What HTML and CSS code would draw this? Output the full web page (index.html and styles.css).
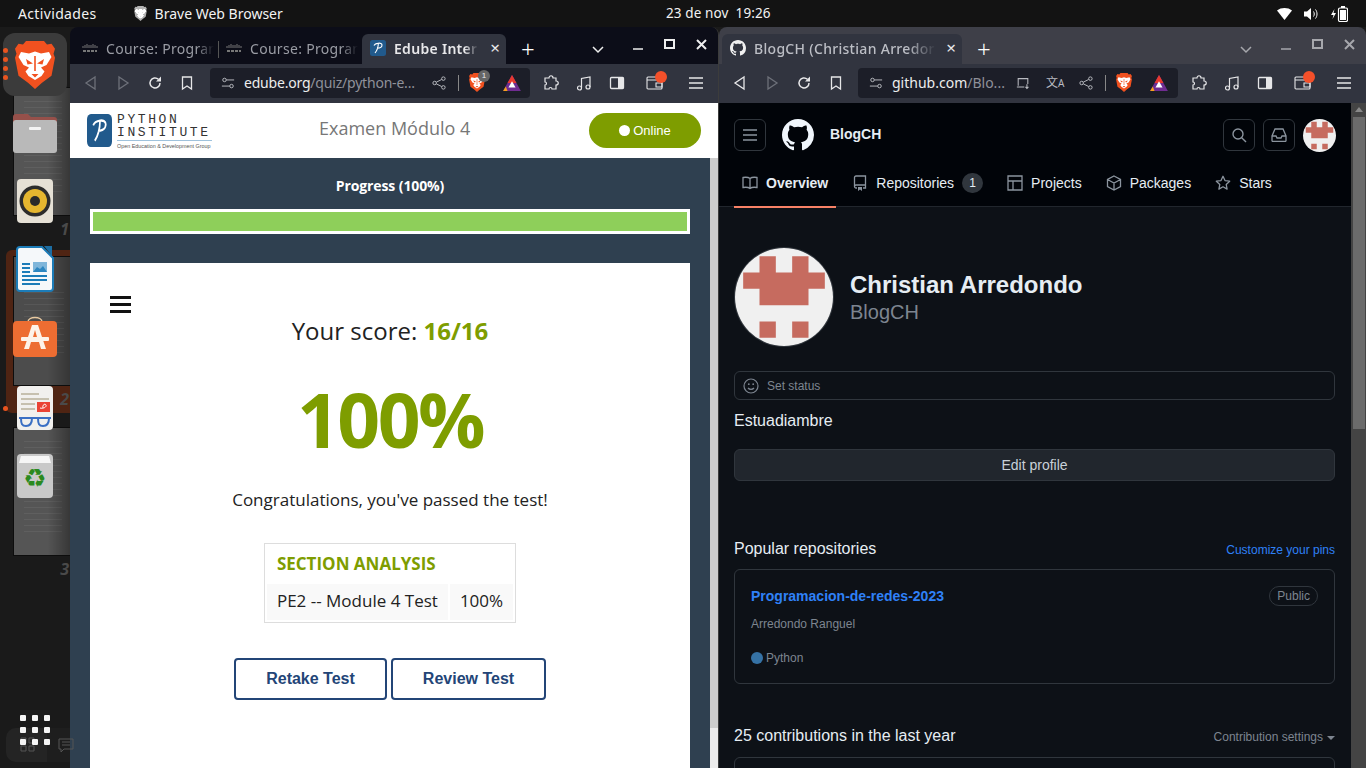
FILE: index.html
```html
<!DOCTYPE html>
<html lang="es">
  <head>
    <meta charset="UTF-8" />
    <title>Escritorio</title>
    <link rel="stylesheet" href="styles.css">
  </head>
  <body>
    <svg class="defs" width="0" height="0">
      <defs>
        <symbol id="brave" viewBox="0 0 40 48">
          <path fill="#f1511f" d="M11 0h18l3 3.500 4.500-.8 3.500 5-1.500 5 1.500 4-3.500 18-9.500 7L20 48l-7-6.300-9.500-7L0 16.700l1.500-4-1.500-5 3.500-5L8 3.500z"/>
          <path fill="#fff" d="M6 11l8 1.500 6-2 6 2 8-1.500 2.500 5-5 8-5.500 2.500 3.500 4-3 4.500-6.500 4-6.500-4-3-4.500 3.500-4-5.500-2.500-5-8z"/>
          <path fill="#f1511f" d="M11 18l7 4.500-5.500 1zM29 18l-7 4.500 5.500 1zM16.500 33h7L20 36.500z"/>
          <path fill="#f1511f" d="M19.200 15h1.600v15h-1.600z"/>
        </symbol>
        <symbol id="bat" viewBox="0 0 20 18">
          <path fill="#6f2c91" d="M10 0L20 18H0z"/>
          <path fill="#e8392f" d="M10 0l5 9H5z"/>
          <path fill="#fff" d="M10 7l4 7H6z"/>
          <path fill="#f7a21b" d="M0 18l3-5 2 5z"/>
        </symbol>
        <symbol id="cisco" viewBox="0 0 16 10">
          <path stroke="#777" stroke-width="1" d="M1 3v2M3 2v3M5 1v4M7 2v3M9 2v3M11 1v4M13 2v3M15 3v2"/>
          <path stroke="#777" stroke-width="2" d="M1 8h14" stroke-dasharray="3 1"/>
        </symbol>
        <symbol id="python-p" viewBox="0 0 16 16" preserveAspectRatio="none">
          <rect width="16" height="16" rx="2.500" fill="#215a8c"/>
          <path fill="none" stroke="#fff" stroke-width="1.100" d="M4 5.500c1-2.500 8-3.500 8-.5s-4 3.200-5 3.200M8.300 3.500c0 3.500-1.300 7-3.300 9.500"/>
        </symbol>
        <symbol id="gh-mark" viewBox="0 0 16 16">
          <path fill="currentColor" d="M8 0C3.580 0 0 3.580 0 8c0 3.540 2.290 6.530 5.470 7.590.4.070.55-.17.55-.38 0-.19-.01-.82-.01-1.490-2.010.37-2.530-.49-2.690-.94-.09-.23-.48-.94-.82-1.130-.28-.15-.68-.52-.01-.53.63-.01 1.080.58 1.230.82.72 1.210 1.870.87 2.330.66.070-.52.28-.87.51-1.070-1.780-.2-3.640-.89-3.640-3.950 0-.87.31-1.590.82-2.150-.08-.2-.36-1.020.08-2.120 0 0 .67-.21 2.200.82.64-.18 1.320-.27 2-.27s1.360.09 2 .27c1.530-1.040 2.200-.82 2.200-.82.44 1.100.16 1.920.08 2.120.51.56.82 1.270.82 2.150 0 3.070-1.870 3.750-3.650 3.950.29.25.54.73.54 1.480 0 1.070-.01 1.930-.01 2.200 0 .21.15.46.55.38A8.010 8.010 0 0016 8c0-4.420-3.580-8-8-8z"/>
        </symbol>
        <symbol id="identicon" viewBox="0 0 6 6">
          <rect width="6" height="6" fill="#f0f0f0"/>
          <path fill="#c66b5f" d="M1.500.5h1v1h1v-1h1v1h1v1h-1v1h-3v-1h-1v-1h1zM1.500 4.500h1v1h-1zM3.500 4.500h1v1h-1z"/>
        </symbol>
        <symbol id="ic-back" viewBox="0 0 16 16"><path fill="none" stroke="currentColor" stroke-width="1.300" d="M12 2v12L3 8z"/></symbol>
        <symbol id="ic-fwd" viewBox="0 0 16 16"><path fill="none" stroke="currentColor" stroke-width="1.300" d="M4 2v12l9-6z"/></symbol>
        <symbol id="ic-reload" viewBox="0 0 16 16"><path fill="none" stroke="currentColor" stroke-width="1.500" d="M13 8a5 5 0 1 1-1.600-3.700"/><path fill="currentColor" d="M14 1.500v5h-5z"/></symbol>
        <symbol id="ic-bookmark" viewBox="0 0 16 16"><path fill="none" stroke="currentColor" stroke-width="1.300" d="M3.500 2h9v12L8 11l-4.500 3z"/></symbol>
        <symbol id="ic-tune" viewBox="0 0 16 16"><g fill="none" stroke="currentColor" stroke-width="1.100"><circle cx="4" cy="4.500" r="2"/><circle cx="12" cy="11.500" r="2"/><path d="M6 4.500h9M1 11.500h9"/></g></symbol>
        <symbol id="ic-share" viewBox="0 0 16 16"><g fill="none" stroke="currentColor" stroke-width="1.100"><circle cx="3" cy="8" r="2"/><circle cx="13" cy="3" r="2"/><circle cx="13" cy="13" r="2"/><path d="M5 7l6-3M5 9l6 3"/></g></symbol>
        <symbol id="ic-puzzle" viewBox="0 0 16 16"><path fill="none" stroke="currentColor" stroke-width="1.200" d="M6 3c0-3 4-3 4 0h3v3c3 0 3 4 0 4v4H9c0-2-3-2-3 0H2v-4c2 0 2-3 0-3V3z"/></symbol>
        <symbol id="ic-music" viewBox="0 0 16 16"><g fill="none" stroke="currentColor" stroke-width="1.200"><circle cx="3.500" cy="13" r="2"/><circle cx="12" cy="12" r="2"/><path d="M5.500 13V3.500L14 2v10"/></g></symbol>
        <symbol id="ic-side" viewBox="0 0 16 16"><rect x="1.500" y="2.500" width="13" height="11" rx="1" fill="none" stroke="currentColor" stroke-width="1.300"/><rect x="9" y="2.500" width="5.500" height="11" fill="currentColor"/></symbol>
        <symbol id="ic-wallet" viewBox="0 0 18 16"><g fill="none" stroke="currentColor" stroke-width="1.100"><rect x="1" y="2" width="15" height="12" rx="1"/><path d="M1 5h15M10 8h6v4h-6z"/></g></symbol>
        <symbol id="ic-menu" viewBox="0 0 16 16"><path stroke="currentColor" stroke-width="1.400" d="M1 3h14M1 8h14M1 13h14"/></symbol>
        <symbol id="ic-cast" viewBox="0 0 16 16"><g fill="none" stroke="currentColor" stroke-width="1.200"><path d="M2.500 11V3h11v6"/><path d="M1 12.500h8.500M12.500 9.500v4.500M10.800 12.500l1.700 1.700 1.700-1.700"/></g></symbol>
        <symbol id="oc-book" viewBox="0 0 16 16"><path fill="none" stroke="currentColor" stroke-width="1.300" d="M8 3.500C6.800 2.500 4 2 1 2.500v10c3-.5 5.800 0 7 1 1.200-1 4-1.500 7-1v-10c-3-.5-5.800 0-7 1zM8 3.500v10"/></symbol>
        <symbol id="oc-repo" viewBox="0 0 16 16"><path fill="none" stroke="currentColor" stroke-width="1.300" d="M5 13H4a1.500 1.500 0 0 1-1.500-1.500v-9A1.500 1.500 0 0 1 4 1h9.500v12H11M2.500 11.500A1.500 1.500 0 0 1 4 10h9.500"/><path fill="currentColor" d="M6 12h4v4l-2-1.500L6 16z"/></symbol>
        <symbol id="oc-table" viewBox="0 0 16 16"><path fill="none" stroke="currentColor" stroke-width="1.300" d="M1 1h14v14H1zM1 6h14M6 6v9"/></symbol>
        <symbol id="oc-pkg" viewBox="0 0 16 16"><path fill="none" stroke="currentColor" stroke-width="1.300" d="M8 1l6.500 3.500v7L8 15l-6.500-3.500v-7zM1.500 4.500L8 8l6.500-3.500M8 8v7"/></symbol>
        <symbol id="oc-star" viewBox="0 0 16 16"><path fill="none" stroke="currentColor" stroke-width="1.300" stroke-linejoin="round" d="M8 1.300l2 4.300 4.700.6-3.500 3.200.9 4.700L8 11.800l-4.100 2.300.9-4.700-3.500-3.200 4.700-.6z"/></symbol>
        <symbol id="oc-search" viewBox="0 0 16 16"><g fill="none" stroke="currentColor" stroke-width="1.400"><circle cx="7" cy="7" r="5"/><path d="M10.700 10.700L15 15"/></g></symbol>
        <symbol id="oc-inbox" viewBox="0 0 16 16"><path fill="none" stroke="currentColor" stroke-width="1.300" d="M4 2h8l3 7v4.500a.800.800 0 0 1-1 .800H2a.800.800 0 0 1-1-.800V9zM1 9h4l1 2h4l1-2h4"/></symbol>
        <symbol id="oc-smile" viewBox="0 0 16 16"><g fill="none" stroke="currentColor" stroke-width="1.200"><circle cx="8" cy="8" r="7"/><path d="M5 10c1.500 1.800 4.500 1.800 6 0"/></g><circle cx="5.800" cy="6.200" r=".9" fill="currentColor"/><circle cx="10.200" cy="6.200" r=".9" fill="currentColor"/></symbol>
      </defs>
    </svg>

    <div class="screen">
      <header class="topbar">
        <div class="topbar-left">
          <span class="activities">Actividades</span>
          <span class="app-name">
            <svg class="app-icon"><use href="#brave"/></svg>
            Brave Web Browser
          </span>
        </div>
        <div class="clock">23 de nov&nbsp; 19:26</div>
        <div class="tray">
          <svg width="15" height="12" viewBox="0 0 15 12"><path fill="#fff" d="M0 2.500C4-.8 11-.8 15 2.500L7.500 12z"/></svg>
          <svg width="15" height="14" viewBox="0 0 15 14"><path fill="#fff" d="M0 4.500h3L7 1v12L3 9.500H0z"/><path fill="none" stroke="#fff" stroke-width="1" d="M9.500 4.500c1 1.500 1 3.500 0 5M11.500 2.500c2 2.500 2 6.500 0 9"/></svg>
          <svg width="17" height="16" viewBox="0 0 17 16"><path fill="#fff" d="M3.500 3L0 9h2.500L1.500 13 5 7H2.500z"/><rect x="7.500" y="2" width="9" height="13.500" rx="1.500" fill="none" stroke="#fff" stroke-width="1.200"/><rect x="10" y="0" width="4" height="2" fill="#fff"/><rect x="9" y="4" width="6" height="10" fill="#fff"/></svg>
        </div>
      </header>

      <div class="desktop">
        <aside class="dock">
          <div class="workspace ws-1"><span class="ws-num">1</span></div>
          <div class="ws-frame"></div>
          <div class="workspace ws-2"><span class="ws-num">2</span></div>
          <div class="workspace ws-3"><span class="ws-num">3</span></div>
          <div class="dock-tray">
            <svg width="16" height="16" viewBox="0 0 16 16"><path fill="none" stroke="#555" d="M1 1h5v5H1zM9 1h5v5H9zM1 9h5v5H1zM9 9h5v5H9z"/></svg>
            <svg width="16" height="16" viewBox="0 0 16 16"><path fill="none" stroke="#555" d="M1 2h14v10H6l-3 3v-3H1zM4 5h8M4 8h8"/></svg>
          </div>

          <div class="dock-icons">
            <div class="dock-item active">
              <span class="run-dots"><i></i><i></i><i></i><i></i></span>
              <svg width="40" height="48"><use href="#brave"/></svg>
            </div>
            <div class="dock-item">
              <svg width="44" height="42" viewBox="0 0 44 42">
                <path fill="#96504a" d="M0 5a3 3 0 0 1 3-3h12l3 3h23a3 3 0 0 1 3 3v10H0z"/>
                <rect y="8" width="44" height="33" rx="3" fill="#b9b9b9"/>
                <rect x="16" y="15" width="12" height="3" rx="1" fill="#f4f4f4"/>
              </svg>
            </div>
            <div class="dock-item">
              <svg width="36" height="44" viewBox="0 0 36 44">
                <rect width="36" height="44" rx="4" fill="#e6e1d6"/>
                <circle cx="18" cy="22" r="15.500" fill="#2c2c2c"/>
                <circle cx="18" cy="22" r="12" fill="#e5b62f"/>
                <circle cx="18" cy="22" r="5" fill="#2a2a2a"/>
              </svg>
            </div>
            <div class="dock-item">
              <svg width="38" height="46" viewBox="0 0 38 46">
                <path fill="#1c6ea4" d="M28 0h8v10z"/>
                <path fill="#f5f8fa" stroke="#1c7cb8" stroke-width="2" d="M4 1h22l11 11v30a3 3 0 0 1-3 3H4a3 3 0 0 1-3-3V4a3 3 0 0 1 3-3z"/>
                <rect x="17" y="16" width="14" height="10" fill="#7fb6da"/>
                <path fill="#2d86c0" d="M17 26l4-5 3 2 3-3 4 6z"/>
                <path stroke="#1c7cb8" stroke-width="2" d="M6 18h8M6 22h8M6 26h8M6 30h25M6 34h25M6 38h18"/>
              </svg>
            </div>
            <div class="dock-item">
              <svg width="44" height="42" viewBox="0 0 44 42">
                <path fill="none" stroke="#e8c9a0" stroke-width="1.500" d="M15 6c0-6 14-6 14 0"/>
                <rect y="5" width="44" height="36" rx="4" fill="#ed6d32"/>
                <path fill="#fdf3ea" d="M19 9h6l8 24h-5l-2-7h-8l-2 7h-5zM20 21h4l-2-7z"/>
                <rect x="8" y="21" width="28" height="4" rx="1" fill="#fdf3ea"/>
              </svg>
            </div>
            <div class="dock-item viewer">
              <i class="run-dot"></i>
              <svg width="36" height="44" viewBox="0 0 36 44">
                <rect width="36" height="44" rx="4" fill="#f1f0ee"/>
                <path stroke="#b8b09a" stroke-width="1.500" d="M4 8h18M4 13h28M4 18h14M4 23h14"/>
                <rect x="20" y="16" width="13" height="10" fill="#ea4335"/>
                <path fill="none" stroke="#fff" d="M23 22c3 1 7-1 6-3s-4 0-3 3"/>
                <path fill="none" stroke="#3a6fc4" stroke-width="2" d="M2 32h32M4 32c0 6 1 8 5 8s6-2 6-8M21 32c0 6 1 8 5 8s6-2 6-8"/>
              </svg>
            </div>
            <div class="dock-item">
              <svg width="36" height="44" viewBox="0 0 36 44">
                <rect width="36" height="44" rx="4" fill="#c9c9c9"/>
                <path fill="#f6f6f6" d="M4 2h28l2 7H2z"/>
                <text class="recycle" x="18" y="33" text-anchor="middle">♻</text>
              </svg>
            </div>
          </div>

          <div class="app-grid">
            <i></i><i></i><i></i><i></i><i></i><i></i><i></i><i></i><i></i>
          </div>
        </aside>

        <section class="window window-left">
          <div class="tabbar">
            <div class="tab">
              <svg class="tab-icon"><use href="#cisco"/></svg>
              <span class="tab-title">Course: Progran</span>
            </div>
            <div class="tab with-divider">
              <svg class="tab-icon"><use href="#cisco"/></svg>
              <span class="tab-title">Course: Progran</span>
            </div>
            <div class="tab current">
              <svg class="tab-icon"><use href="#python-p"/></svg>
              <span class="tab-title">Edube Inter</span>
              <span class="tab-close">×</span>
            </div>
            <span class="tab-new">+</span>
            <div class="win-controls">
              <svg class="win-chevron" width="12" height="8" viewBox="0 0 12 8"><path fill="none" stroke="currentColor" stroke-width="1.500" d="M1 1l5 5 5-5"/></svg>
              <svg width="12" height="12" viewBox="0 0 12 12"><path stroke="currentColor" stroke-width="1.500" d="M1 10h10"/></svg>
              <svg width="12" height="12" viewBox="0 0 12 12"><rect x="1" y="1" width="9" height="8" fill="none" stroke="currentColor" stroke-width="2"/></svg>
              <svg width="12" height="12" viewBox="0 0 12 12"><path stroke="currentColor" stroke-width="2" d="M1 1l9 9M10 1l-9 9"/></svg>
            </div>
          </div>
          <div class="toolbar">
            <div class="nav-buttons">
              <svg class="ic dim"><use href="#ic-back"/></svg>
              <svg class="ic dim"><use href="#ic-fwd"/></svg>
              <svg class="ic"><use href="#ic-reload"/></svg>
              <svg class="ic"><use href="#ic-bookmark"/></svg>
            </div>
            <div class="urlbar">
              <svg class="ic-sm"><use href="#ic-tune"/></svg>
              <span class="url"><b>edube.org</b>/quiz/python-e...</span>
              <svg class="ic-sm"><use href="#ic-share"/></svg>
              <span class="url-div"></span>
              <span class="shield">
                <svg width="16" height="19"><use href="#brave"/></svg>
                <em class="shield-count">1</em>
              </span>
              <svg class="bat" width="18" height="16"><use href="#bat"/></svg>
            </div>
            <div class="tool-buttons">
              <svg class="ic"><use href="#ic-puzzle"/></svg>
              <svg class="ic"><use href="#ic-music"/></svg>
              <svg class="ic"><use href="#ic-side"/></svg>
              <span class="wallet"><svg class="ic"><use href="#ic-wallet"/></svg><i class="wallet-dot"></i></span>
              <svg class="ic"><use href="#ic-menu"/></svg>
            </div>
          </div>

          <main class="quiz">
            <div class="quiz-head">
              <div class="pi-logo">
                <svg width="25" height="33"><use href="#python-p"/></svg>
                <div class="pi-text">
                  <div class="pi-line1">PYTHON</div>
                  <div class="pi-line2">INSTITUTE</div>
                  <div class="pi-line3">Open Education &amp; Development Group</div>
                </div>
              </div>
              <div class="quiz-title">Examen Módulo 4</div>
              <div class="online"><i></i>Online</div>
            </div>
            <div class="quiz-row">
              <div class="quiz-body">
                <div class="progress-label">Progress (100%)</div>
                <div class="progress"><div class="progress-fill"></div></div>
                <div class="result-card">
                  <div class="burger"><i></i><i></i><i></i></div>
                  <p class="score">Your score: <b>16/16</b></p>
                  <p class="percent">100%</p>
                  <p class="congrats">Congratulations, you've passed the test!</p>
                  <table class="analysis">
                    <tr><th colspan="2">SECTION ANALYSIS</th></tr>
                    <tr><td>PE2 -- Module 4 Test</td><td>100%</td></tr>
                  </table>
                  <div class="result-actions">
                    <button class="btn-retake">Retake Test</button>
                    <button class="btn-review">Review Test</button>
                  </div>
                </div>
              </div>
              <div class="scroll scroll-light"><div class="scroll-thumb"></div></div>
            </div>
          </main>
        </section>

        <section class="window window-right">
          <div class="tabbar">
            <div class="tab current">
              <svg class="tab-icon gh"><use href="#gh-mark"/></svg>
              <span class="tab-title">BlogCH (Christian Arredor</span>
              <span class="tab-close">×</span>
            </div>
            <span class="tab-new">+</span>
            <div class="win-controls">
              <svg class="win-chevron" width="12" height="8" viewBox="0 0 12 8"><path fill="none" stroke="currentColor" stroke-width="1.500" d="M1 1l5 5 5-5"/></svg>
              <svg width="12" height="12" viewBox="0 0 12 12"><path stroke="currentColor" stroke-width="1.500" d="M1 10h10"/></svg>
              <svg width="12" height="12" viewBox="0 0 12 12"><rect x="1" y="1" width="9" height="8" fill="none" stroke="currentColor" stroke-width="2"/></svg>
              <svg width="12" height="12" viewBox="0 0 12 12"><path stroke="currentColor" stroke-width="2" d="M1 1l9 9M10 1l-9 9"/></svg>
            </div>
          </div>
          <div class="toolbar">
            <div class="nav-buttons">
              <svg class="ic"><use href="#ic-back"/></svg>
              <svg class="ic dim"><use href="#ic-fwd"/></svg>
              <svg class="ic"><use href="#ic-reload"/></svg>
              <svg class="ic"><use href="#ic-bookmark"/></svg>
            </div>
            <div class="urlbar">
              <svg class="ic-sm"><use href="#ic-tune"/></svg>
              <span class="url short"><b>github.com</b>/Blo...</span>
              <svg class="ic-sm"><use href="#ic-cast"/></svg>
              <span class="translate">文<small>A</small></span>
              <svg class="ic-sm"><use href="#ic-share"/></svg>
              <span class="url-div"></span>
              <span class="shield">
                <svg width="16" height="19"><use href="#brave"/></svg>
              </span>
              <svg class="bat" width="18" height="16"><use href="#bat"/></svg>
            </div>
            <div class="tool-buttons">
              <svg class="ic"><use href="#ic-puzzle"/></svg>
              <svg class="ic"><use href="#ic-music"/></svg>
              <svg class="ic"><use href="#ic-side"/></svg>
              <span class="wallet"><svg class="ic"><use href="#ic-wallet"/></svg><i class="wallet-dot"></i></span>
              <svg class="ic"><use href="#ic-menu"/></svg>
            </div>
          </div>

          <div class="viewport">
            <main class="gh-page">
              <div class="gh-head">
                <div class="gh-top">
                  <span class="gh-btn"><svg width="16" height="16"><use href="#ic-menu"/></svg></span>
                  <svg class="gh-logo" width="32" height="32"><use href="#gh-mark"/></svg>
                  <span class="gh-user">BlogCH</span>
                  <span class="gh-spacer"></span>
                  <span class="gh-btn"><svg width="16" height="16"><use href="#oc-search"/></svg></span>
                  <span class="gh-btn"><svg width="16" height="16"><use href="#oc-inbox"/></svg></span>
                  <svg class="gh-mini-avatar" width="33" height="33"><use href="#identicon"/></svg>
                </div>
                <nav class="gh-tabs">
                  <a class="gh-tab selected"><svg width="16" height="16"><use href="#oc-book"/></svg>Overview</a>
                  <a class="gh-tab"><svg width="16" height="16"><use href="#oc-repo"/></svg>Repositories<span class="counter">1</span></a>
                  <a class="gh-tab"><svg width="16" height="16"><use href="#oc-table"/></svg>Projects</a>
                  <a class="gh-tab"><svg width="16" height="16"><use href="#oc-pkg"/></svg>Packages</a>
                  <a class="gh-tab"><svg width="16" height="16"><use href="#oc-star"/></svg>Stars</a>
                </nav>
              </div>
              <div class="gh-body">
                <div class="profile">
                  <svg class="profile-avatar" width="98" height="98"><use href="#identicon"/></svg>
                  <div>
                    <div class="profile-name">Christian Arredondo</div>
                    <div class="profile-login">BlogCH</div>
                  </div>
                </div>
                <div class="set-status"><svg width="16" height="16"><use href="#oc-smile"/></svg>Set status</div>
                <div class="bio">Estuadiambre</div>
                <div class="edit-profile">Edit profile</div>
                <div class="section-head pins-head">
                  <h2>Popular repositories</h2>
                  <a class="pins-link">Customize your pins</a>
                </div>
                <div class="repo-card">
                  <div class="repo-top">
                    <a class="repo-name">Programacion-de-redes-2023</a>
                    <span class="repo-badge">Public</span>
                  </div>
                  <p class="repo-desc">Arredondo Ranguel</p>
                  <p class="repo-lang"><i></i>Python</p>
                </div>
                <div class="section-head contrib-head">
                  <h2>25 contributions in the last year</h2>
                  <span class="contrib-settings">Contribution settings<i class="caret"></i></span>
                </div>
                <div class="contrib-box"></div>
              </div>
            </main>
            <div class="scroll scroll-dark"><div class="scroll-thumb"></div></div>
          </div>
        </section>
      </div>
    </div>
  </body>
</html>
```

FILE: styles.css
```css
* {
  box-sizing: border-box;
}
html,
body {
  margin: 0;
  height: 100%;
  overflow: hidden;
  background: #1a1a1a;
}
.defs {
  position: absolute;
}
.screen {
  width: 1366px;
  height: 768px;
  display: flex;
  flex-direction: column;
  overflow: hidden;
  font-family: "Noto Sans", sans-serif;
}

/* top bar */
.topbar {
  height: 27px;
  flex: none;
  background: #131313;
  color: #f2f2f2;
  font-size: 14px;
  position: relative;
  display: flex;
  align-items: center;
  justify-content: space-between;
  padding: 0 17px 0 18px;
}
.topbar-left {
  display: flex;
  align-items: center;
  gap: 37px;
}
.activities {
  letter-spacing: 0.35px;
}
.app-name {
  display: flex;
  align-items: center;
  gap: 8px;
}
.app-icon {
  width: 13px;
  height: 15px;
  filter: grayscale(1) brightness(1.6);
}
.clock {
  position: absolute;
  left: 666px;
  top: 4px;
  font-size: 13.5px;
  letter-spacing: 0.1px;
}
.tray {
  display: flex;
  align-items: center;
  gap: 12px;
  padding-right: 1px;
}

/* dock and workspaces */
.desktop {
  flex: 1;
  display: flex;
  position: relative;
  min-height: 0;
}
.dock {
  width: 70px;
  flex: none;
  position: relative;
  background: #1a1a1a;
}
.workspace {
  position: absolute;
  left: 13px;
  width: 57px;
  height: 129px;
  border: 1px solid #0d0d0d;
  border-right: 0;
  background:
    linear-gradient(90deg, transparent 60%, rgba(0, 0, 0, 0.35)),
    repeating-linear-gradient(180deg, transparent 0 5px, #5f5f5f 5px 6px) 10px 8px / 38px 100px no-repeat,
    #555;
}
.ws-1 {
  top: 60px;
}
.ws-frame {
  position: absolute;
  left: 6px;
  top: 223px;
  width: 64px;
  height: 163px;
  background: #4f2413;
  border-radius: 6px 0 0 6px;
}
.ws-2 {
  top: 229px;
  height: 130px;
  background:
    linear-gradient(90deg, transparent 60%, rgba(0, 0, 0, 0.3)),
    repeating-linear-gradient(180deg, transparent 0 5px, #575757 5px 6px) 10px 30px / 40px 70px no-repeat,
    #4c4c4c;
}
.ws-3 {
  top: 400px;
}
.ws-num {
  position: absolute;
  right: 1px;
  bottom: -25px;
  color: #4a4a4a;
  font: italic bold 16px "Noto Sans", sans-serif;
}
.dock-tray {
  position: absolute;
  left: 6px;
  top: 701px;
  width: 64px;
  height: 34px;
  border-radius: 10px 0 0 10px;
  background: linear-gradient(90deg, #242424 64%, #1e1e1e 64%);
  display: flex;
  align-items: center;
  justify-content: space-between;
  padding: 0 0 0 14px;
}
.dock-tray svg:last-child {
  margin-right: -4px;
}
.dock-icons {
  position: relative;
  padding-top: 6px;
  display: flex;
  flex-direction: column;
  gap: 4px;
}
.dock-item {
  height: 64px;
  width: 64px;
  margin-left: 3px;
  display: flex;
  align-items: center;
  justify-content: center;
  border-radius: 12px;
  position: relative;
}
.dock-item.active {
  background: #3b3b3b;
  height: 63px;
  margin-bottom: 1px;
}
.dock-item.viewer {
  margin-top: 3px;
}
.recycle {
  font: 26px "DejaVu Sans", sans-serif;
  fill: #2b8a1f;
}
.run-dots {
  position: absolute;
  left: 0;
  top: 15px;
  display: flex;
  flex-direction: column;
  gap: 4px;
}
.run-dots i,
.run-dot {
  width: 5px;
  height: 5px;
  border-radius: 50%;
  background: #e9541f;
}
.run-dot {
  position: absolute;
  left: 0;
  top: 30px;
}
.app-grid {
  position: absolute;
  left: 20px;
  top: 688px;
  display: grid;
  grid-template-columns: repeat(3, 6px);
  grid-auto-rows: 6px;
  gap: 6px;
}
.app-grid i {
  background: #f4f4f4;
  border-radius: 1px;
}

/* browser windows */
.window {
  display: flex;
  flex-direction: column;
  min-width: 0;
  border-radius: 8px 8px 0 0;
  overflow: hidden;
}
.window-left {
  width: 649px;
  border-right: 1px solid #3c3c3c;
  --bar: #0c0d18;
}
.window-right {
  flex: 1;
  --bar: #3e3f48;
}
.tabbar {
  height: 37px;
  flex: none;
  background: var(--bar);
  display: flex;
  align-items: flex-end;
  position: relative;
  color: #cfd0d4;
}
.tab {
  height: 30px;
  width: 144px;
  display: flex;
  align-items: center;
  padding: 0 0 2px 12px;
  gap: 8px;
  font-size: 14px;
  color: #9a9ca4;
  position: relative;
  flex: none;
}
.tab.with-divider::before {
  content: "";
  position: absolute;
  left: 4px;
  top: 7px;
  height: 17px;
  width: 1px;
  background: #555;
}
.tab-icon {
  width: 16px;
  height: 16px;
  flex: none;
}
.tab-title {
  white-space: nowrap;
  width: 108px;
  letter-spacing: 0.3px;
  -webkit-mask-image: linear-gradient(90deg, #000 84%, transparent 100%);
  mask-image: linear-gradient(90deg, #000 84%, transparent 100%);
}
.tab.current {
  background: #31343f;
  color: #e8e8ea;
  border-radius: 6px 6px 0 0;
  padding-left: 8px;
  font-weight: 600;
  margin-left: 4px;
}
.tab.current .tab-title {
  width: 84px;
}
.window-right .tab.current {
  width: 240px;
  margin-left: 3px;
  color: #bcbec5;
  font-weight: 500;
}
.window-right .tab.current .tab-title {
  width: 182px;
}
.tab-icon.gh {
  color: #f0f0f0;
}
.tab-close {
  font-size: 17px;
  font-weight: 400;
  line-height: 1;
  position: absolute;
  right: 6px;
  top: 5px;
  color: #e8e8ea;
}
.tab-new {
  font-size: 24px;
  line-height: 30px;
  height: 30px;
  color: #fff;
  margin-left: 15px;
  font-weight: 300;
}
.win-controls {
  position: absolute;
  right: 10px;
  top: 12px;
  display: flex;
  align-items: center;
  gap: 20px;
  color: #eee;
}
.win-chevron {
  margin-right: 8px;
  position: relative;
  top: 5px;
}
.window-right .win-controls {
  color: #a6a7ac;
}
.toolbar {
  height: 39px;
  flex: none;
  background: #31343f;
  display: flex;
  align-items: center;
  color: #e6e6e8;
  padding-bottom: 2px;
}
.nav-buttons {
  display: flex;
  align-items: center;
  gap: 16px;
  padding-left: 13px;
  width: 140px;
}
.window-right .nav-buttons {
  width: 139px;
}
.ic {
  width: 16px;
  height: 16px;
  flex: none;
}
.ic.dim {
  color: #6d7079;
}
.urlbar {
  width: 320px;
  height: 30px;
  background: #1c1e28;
  border-radius: 4px;
  display: flex;
  align-items: center;
  padding-left: 11px;
  color: #b9bbc1;
  flex: none;
}
.ic-sm {
  width: 14px;
  height: 14px;
  flex: none;
}
.url {
  font-size: 14px;
  color: #8f919a;
  margin-left: 9px;
  width: 188px;
  white-space: nowrap;
  letter-spacing: -0.2px;
}
.url.short {
  width: 124px;
  letter-spacing: 0;
}
.url b {
  font-weight: 400;
  color: #eceded;
}
.translate {
  font-family: "Noto Sans CJK SC", sans-serif;
  font-size: 12px;
  margin: 0 15px 0 16px;
  width: 18px;
  line-height: 1;
  white-space: nowrap;
}
.translate small {
  font: 10px "Noto Sans", sans-serif;
}
.url-div {
  width: 1px;
  height: 16px;
  background: #888;
  margin: 0 10px 0 12px;
}
.shield {
  position: relative;
  display: flex;
  width: 16px;
}
.shield-count {
  position: absolute;
  left: 9px;
  top: -3px;
  width: 12px;
  height: 12px;
  border-radius: 50%;
  background: #666;
  color: #eee;
  font: normal 8px/12px "Liberation Sans", sans-serif;
  text-align: center;
}
.bat {
  margin-left: 18px;
}
.tool-buttons {
  display: flex;
  align-items: center;
  padding-left: 13px;
  flex: 1;
  gap: 17px;
}
.wallet {
  position: relative;
  display: flex;
  margin-left: 4px;
  margin-right: 7px;
  width: 18px;
}
.wallet .ic {
  width: 18px;
}
.wallet-dot {
  position: absolute;
  left: 9px;
  top: -4px;
  width: 12px;
  height: 12px;
  border-radius: 50%;
  background: #f4502a;
}
.viewport {
  flex: 1;
  display: flex;
  min-height: 0;
}
.scroll {
  flex: none;
  position: relative;
}
.scroll-light {
  width: 8px;
  background: #ececec;
}
.scroll-light .scroll-thumb {
  height: 570px;
  background: #cdcdcd;
}
.scroll-dark {
  width: 15px;
  background: #444;
  padding-top: 14px;
}
.scroll-dark::before {
  content: "";
  position: absolute;
  left: 4px;
  top: 4px;
  border: 4px solid transparent;
  border-top: 0;
  border-bottom: 5px solid #888;
}
.scroll-dark .scroll-thumb {
  height: 312px;
  background: #6b6b6b;
  margin: 0 1px 0 2px;
}

/* quiz page */
.quiz {
  flex: 1;
  min-width: 0;
  min-height: 0;
  background: #2f4050;
  display: flex;
  flex-direction: column;
  font-family: "Open Sans", sans-serif;
}
.quiz-head {
  height: 55px;
  flex: none;
  background: #fff;
  display: flex;
  align-items: center;
  position: relative;
  padding: 0 17px 0 17px;
  justify-content: space-between;
}
.pi-logo {
  display: flex;
  align-items: center;
  gap: 5px;
}
.pi-text {
  color: #333;
  font-family: "Liberation Mono", monospace;
  line-height: 1;
  width: 95px;
}
.pi-line1,
.pi-line2 {
  font-size: 13px;
  letter-spacing: 2.6px;
  line-height: 13px;
  white-space: nowrap;
}
.pi-line2 {
  border-bottom: 1px solid #9fc2dc;
  padding-bottom: 1px;
}
.pi-line3 {
  font: 5.4px "Liberation Sans", sans-serif;
  white-space: nowrap;
  margin-top: 2px;
  color: #555;
}
.quiz-title {
  position: absolute;
  left: 249px;
  top: 13px;
  font-size: 18px;
  color: #777;
}
.online {
  width: 112px;
  height: 35px;
  border-radius: 18px;
  background: #7e9d00;
  color: #fff;
  font: 13px "Liberation Sans", sans-serif;
  display: flex;
  align-items: center;
  justify-content: center;
  gap: 3px;
}
.online i {
  width: 11px;
  height: 11px;
  border-radius: 50%;
  background: #fff;
}
.quiz-row {
  flex: 1;
  min-height: 0;
  display: flex;
}
.quiz-body {
  flex: 1;
  min-width: 0;
  padding: 0 20px;
}
.progress-label {
  text-align: center;
  color: #fff;
  font-size: 14px;
  font-weight: 700;
  padding-top: 19px;
  line-height: 18px;
  letter-spacing: -0.1px;
}
.progress {
  margin-top: 14px;
  height: 25px;
  background: #fff;
  padding: 3px;
}
.progress-fill {
  height: 100%;
  background: #8ecf5a;
}
.result-card {
  margin-top: 29px;
  height: 505px;
  background: #fff;
  position: relative;
  text-align: center;
  color: #222;
  padding-top: 51px;
}
.burger {
  position: absolute;
  left: 20px;
  top: 33px;
  width: 21px;
  display: flex;
  flex-direction: column;
  gap: 4px;
}
.burger i {
  height: 3px;
  background: #111;
}
.result-card p {
  margin: 0;
}
.score {
  font-size: 24px;
  line-height: 34px;
}
.score b {
  color: #7e9d00;
  font-weight: 700;
}
.result-card .percent {
  font-size: 75px;
  font-weight: 700;
  color: #7e9d00;
  line-height: 104px;
  margin-top: 19px;
  letter-spacing: -2.5px;
}
.result-card .congrats {
  font-size: 17px;
  line-height: 24px;
  margin-top: 17px;
}
.analysis {
  margin: 31px auto 0;
  width: 252px;
  height: 80px;
  border: 1px solid #ddd;
  border-spacing: 2px;
  text-align: left;
  font-size: 17px;
}
.analysis th {
  color: #7e9d00;
  font-size: 17px;
  font-weight: 700;
  padding: 0 10px 2px;
  height: 36px;
  line-height: 1;
}
.analysis td {
  background: #f9f9f9;
  padding: 0 10px 3px;
  height: 36px;
  line-height: 1;
  white-space: nowrap;
}
.result-actions {
  margin-top: 35px;
  display: flex;
  justify-content: center;
  gap: 4px;
}
.result-actions button {
  height: 42px;
  background: #fff;
  border: 2px solid #234577;
  border-radius: 4px;
  color: #234577;
  font: bold 16px "Liberation Sans", sans-serif;
  padding: 0;
}
.btn-retake {
  width: 153px;
}
.btn-review {
  width: 155px;
}

/* github page */
.gh-page {
  flex: 1;
  min-width: 0;
  background: #0d1117;
  color: #e6edf3;
  font-family: "Liberation Sans", sans-serif;
  font-size: 14px;
}
.gh-head {
  background: #010409;
  height: 104px;
  border-bottom: 1px solid #21262d;
  padding: 16px 0 0 15px;
}
.gh-top {
  display: flex;
  align-items: center;
  gap: 8px;
  height: 32px;
  width: 602px;
}
.gh-btn {
  width: 32px;
  height: 32px;
  border: 1px solid #30363d;
  border-radius: 6px;
  display: flex;
  align-items: center;
  justify-content: center;
  color: #8b949e;
}
.gh-logo {
  margin-left: 8px;
  color: #f0f6fc;
}
.gh-user {
  font-weight: 700;
  margin-left: 8px;
  padding-bottom: 2px;
}
.gh-spacer {
  flex: 1;
}
.gh-mini-avatar {
  border-radius: 50%;
}
.gh-tabs {
  display: flex;
  margin-top: 16px;
  height: 40px;
}
.gh-tab {
  display: flex;
  align-items: center;
  gap: 8px;
  padding: 0 8px 8px;
  margin-right: 8px;
  height: 40px;
  color: #e6edf3;
  position: relative;
  white-space: nowrap;
}
.gh-tab svg {
  color: #8b949e;
}
.gh-tab.selected {
  font-weight: 700;
}
.gh-tab.selected::after {
  content: "";
  position: absolute;
  left: 0;
  right: 0;
  bottom: -1px;
  height: 2px;
  background: #f78166;
}
.counter {
  width: 21px;
  height: 20px;
  border-radius: 10px;
  background: #30363d;
  font-size: 12px;
  text-align: center;
  line-height: 20px;
}
.gh-body {
  padding: 41px 16px 0 15px;
}
.profile {
  display: flex;
  align-items: center;
  gap: 17px;
  margin-left: 1px;
}
.profile-avatar {
  border-radius: 50%;
  box-shadow: 0 0 0 1px #30363d;
}
.profile-name {
  font-size: 24px;
  font-weight: 700;
  line-height: 30px;
}
.profile-login {
  font-size: 20px;
  color: #7d8590;
  line-height: 24px;
}
.set-status {
  margin-top: 25px;
  height: 29px;
  border: 1px solid #30363d;
  border-radius: 6px;
  display: flex;
  align-items: center;
  gap: 8px;
  padding-left: 8px;
  color: #7d8590;
  font-size: 12px;
}
.bio {
  font-size: 16px;
  line-height: 24px;
  margin-top: 9px;
}
.edit-profile {
  margin-top: 16px;
  height: 32px;
  background: #21262d;
  border: 1px solid #30363d;
  border-radius: 6px;
  text-align: center;
  line-height: 30px;
  color: #c9d1d9;
}
.section-head {
  display: flex;
  justify-content: space-between;
  align-items: baseline;
}
.section-head h2 {
  margin: 0;
  font-size: 16px;
  font-weight: 400;
  line-height: 24px;
}
.pins-head {
  margin-top: 56px;
}
.pins-link {
  color: #2f81f7;
  font-size: 12px;
}
.repo-card {
  margin-top: 8px;
  height: 115px;
  border: 1px solid #30363d;
  border-radius: 6px;
  padding: 16px;
}
.repo-top {
  display: flex;
  justify-content: space-between;
  align-items: center;
  height: 20px;
}
.repo-name {
  color: #2f81f7;
  font-weight: 700;
}
.repo-badge {
  border: 1px solid #30363d;
  border-radius: 10px;
  color: #7d8590;
  font-size: 12px;
  line-height: 18px;
  padding: 0 7px;
}
.repo-card p {
  margin: 0;
  color: #7d8590;
  font-size: 12px;
}
.repo-card .repo-desc {
  margin-top: 9px;
  line-height: 18px;
}
.repo-card .repo-lang {
  margin-top: 16px;
  display: flex;
  align-items: center;
  gap: 3px;
  line-height: 18px;
}
.repo-lang i {
  width: 12px;
  height: 12px;
  border-radius: 50%;
  background: #3572a5;
}
.contrib-head {
  margin-top: 40px;
}
.contrib-settings {
  color: #7d8590;
  font-size: 12px;
}
.caret {
  display: inline-block;
  margin-left: 4px;
  vertical-align: middle;
  border: 4px solid transparent;
  border-bottom: 0;
  border-top-color: #7d8590;
}
.contrib-box {
  margin-top: 9px;
  height: 40px;
  border: 1px solid #30363d;
  border-radius: 6px;
}
```
